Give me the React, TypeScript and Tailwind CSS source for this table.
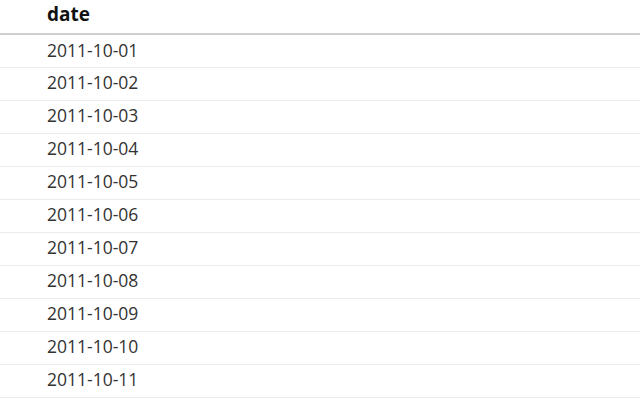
const dates = Array.from({ length: 11 }, (_, i) => `2011-10-${String(i + 1).padStart(2, "0")}`);

export default function App() {
  return (
    <div className="h-[400px] w-[640px] overflow-hidden bg-white font-['Open_Sans',sans-serif] text-[17.5px] text-[#333]">
      <table className="w-full border-collapse">
        <thead>
          <tr className="h-[34px] border-b-2 border-[#cfcfcf]">
            <th className="pb-[4px] pl-[47px] text-left align-middle text-[19px] font-bold text-[#111]">date</th>
          </tr>
        </thead>
        <tbody>
          {dates.map((d) => (
            <tr key={d} className="h-[33px] border-b border-[#ebebeb]">
              <td className="pb-[2px] pl-[47px] align-middle">{d}</td>
            </tr>
          ))}
        </tbody>
      </table>
    </div>
  );
}
